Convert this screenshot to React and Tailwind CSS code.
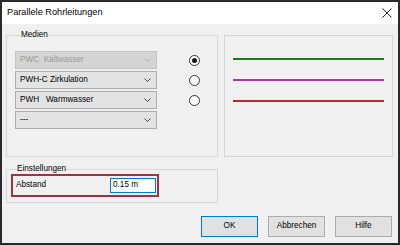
import { useState } from 'react';

const font = { fontFamily: '"Liberation Sans", Arial, sans-serif' };

const Chevron = ({ color = '#333' }) => (
  <svg width="7" height="4" viewBox="0 0 7 4" className="shrink-0">
    <polyline points="0.5,0.5 3.5,3.5 6.5,0.5" fill="none" stroke={color} strokeWidth="1" />
  </svg>
);

// Windows-artige Combobox
const Combo = ({ label, disabled }) => (
  <div
    className={
      disabled
        ? 'w-[142px] h-[18px] flex items-center justify-between pl-[4px] pr-[5px] border border-[#c4c4c4] bg-[#d4d4d4] text-[#9a9a9a]'
        : 'w-[142px] h-[18px] flex items-center justify-between pl-[4px] pr-[5px] border border-[#acacac] bg-[#e3e3e3] text-black'
    }
  >
    <span className="whitespace-pre text-[8.2px] leading-none">{label}</span>
    <Chevron color={disabled ? '#b0b0b0' : '#444'} />
  </div>
);

const Radio = ({ checked, onClick }) => (
  <button
    onClick={onClick}
    className="ml-[32px] w-[11px] h-[11px] rounded-full border border-[#333] bg-white flex items-center justify-center"
  >
    {checked && <span className="w-[5px] h-[5px] rounded-full bg-[#1a1a1a]" />}
  </button>
);

const App = () => {
  const [selected, setSelected] = useState(0);

  const rows = [
    { label: 'PWC  Kaltwasser', disabled: true },
    { label: 'PWH-C Zirkulation' },
    { label: 'PWH   Warmwasser' },
    { label: '---' },
  ];

  return (
    <div
      className="w-[400px] h-[245px] border-2 border-[#2a2a2a] flex flex-col bg-[#f0f0f0] text-black"
      style={font}
    >
      {/* Titelleiste */}
      <div className="h-[22px] bg-white flex items-center justify-between pl-[5px] pr-[6px] shrink-0">
        <span className="text-[9.2px]">Parallele Rohrleitungen</span>
        <svg width="10" height="10" viewBox="0 0 10 10">
          <path d="M0.5 0.5 L9.5 9.5 M9.5 0.5 L0.5 9.5" stroke="#222" strokeWidth="1" />
        </svg>
      </div>

      <div className="flex-1 flex flex-col pl-[4px] pr-[5px] pt-[5px]">
        {/* Medien + Vorschau */}
        <div className="flex gap-[6px]">
          <fieldset className="w-[212px] h-[128px] border border-[#d8d8d8] pl-[8px] pr-0">
            <legend className="ml-[6px] px-0 text-[8.2px] leading-[12px]">Medien</legend>
            <div className="flex flex-col gap-[2px] pt-[10px]">
              {rows.map((row, i) => (
                <div key={i} className="flex items-center">
                  <Combo label={row.label} disabled={row.disabled} />
                  {i < 3 && <Radio checked={selected === i} onClick={() => setSelected(i)} />}
                </div>
              ))}
            </div>
          </fieldset>

          <div className="mt-[6px] w-[169px] h-[122px] border border-[#d5d5d5] flex flex-col gap-[19px] pt-[22px] px-[8px]">
            <div className="h-[2px] bg-[#1d7a1d]" />
            <div className="h-[2px] bg-[#a53aa5]" />
            <div className="h-[2px] bg-[#c2262c]" />
          </div>
        </div>

        {/* Einstellungen */}
        <fieldset className="mt-[6px] w-[212px] h-[40px] border border-[#d8d8d8] pl-[4px]">
          <legend className="ml-[6px] px-0 text-[8.2px] leading-[12px]">Einstellungen</legend>
          <div className="w-[148px] h-[23px] -mt-[1px] border-2 border-[#a23145] flex items-center justify-between pl-[3px] pr-[1px]">
            <span className="text-[8.2px]">Abstand</span>
            <div className="w-[46px] h-[15px] border border-[#0078d7] bg-white flex items-center pl-[2px] text-[8.2px]">
              0.15 m
            </div>
          </div>
        </fieldset>

        {/* Schaltflächen */}
        <div className="mt-[13px] flex justify-end gap-[10px] pr-[1px]">
          <button className="w-[57px] h-[21px] border border-[#0078d7] bg-[#e1e1e1] text-[8.2px]">OK</button>
          <button className="w-[57px] h-[21px] border border-[#adadad] bg-[#e1e1e1] text-[8.2px]">Abbrechen</button>
          <button className="w-[57px] h-[21px] border border-[#adadad] bg-[#e1e1e1] text-[8.2px]">Hilfe</button>
        </div>
      </div>
    </div>
  );
};

export default App;
